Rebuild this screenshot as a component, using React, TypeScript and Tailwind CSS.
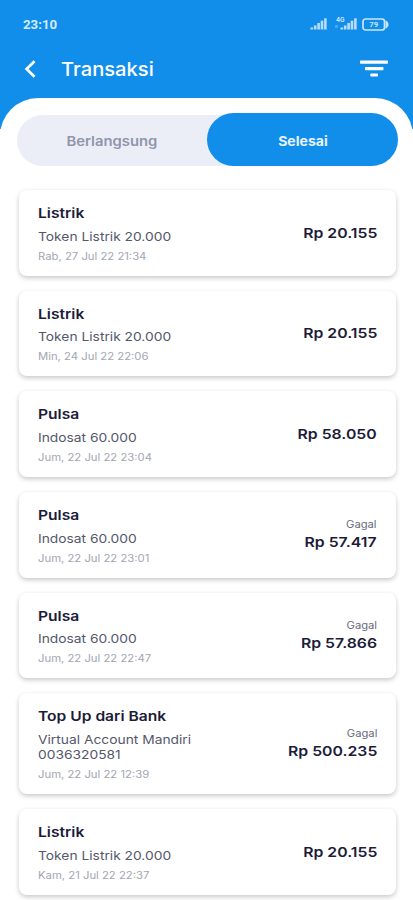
type Transaction = {
  name: string;
  detail: string[];
  date: string;
  amount: string;
  failed?: boolean;
};

const transactions: Transaction[] = [
  { name: "Listrik", detail: ["Token Listrik 20.000"], date: "Rab, 27 Jul 22 21:34", amount: "Rp 20.155" },
  { name: "Listrik", detail: ["Token Listrik 20.000"], date: "Min, 24 Jul 22 22:06", amount: "Rp 20.155" },
  { name: "Pulsa", detail: ["Indosat 60.000"], date: "Jum, 22 Jul 22 23:04", amount: "Rp 58.050" },
  { name: "Pulsa", detail: ["Indosat 60.000"], date: "Jum, 22 Jul 22 23:01", amount: "Rp 57.417", failed: true },
  { name: "Pulsa", detail: ["Indosat 60.000"], date: "Jum, 22 Jul 22 22:47", amount: "Rp 57.866", failed: true },
  { name: "Top Up dari Bank", detail: ["Virtual Account Mandiri", "0036320581"], date: "Jum, 22 Jul 22 12:39", amount: "Rp 500.235", failed: true },
  { name: "Listrik", detail: ["Token Listrik 20.000"], date: "Kam, 21 Jul 22 22:37", amount: "Rp 20.155" },
];

const Signal = () => (
  <svg width="17" height="12" viewBox="0 0 17 12" fill="#b9dcfa">
    <rect x="0.5" y="9.5" width="2.6" height="2" />
    <rect x="3.9" y="7.5" width="2.6" height="4" />
    <rect x="7.3" y="5" width="2.6" height="6.5" />
    <rect x="10.7" y="2.7" width="2.6" height="8.8" />
    <rect x="14.1" y="0.3" width="2.6" height="11.2" />
  </svg>
);

const StatusBar = () => (
  <div className="flex h-[48px] items-center justify-between pl-[23px] pr-[24px]">
    <span className="mt-0.5 text-[12.5px] font-bold leading-none text-[#d3ebff] font-['Roboto',sans-serif] origin-left scale-x-[1.06]">
      23:10
    </span>
    <div className="flex items-center">
      <Signal />
      <div className="relative ml-[13px] mr-[5px] h-3">
        <Signal />
        <span className="absolute -left-[4px] -top-px text-[6px] font-bold leading-none text-[#cfe7fc]">4G</span>
        <span className="absolute -left-[5px] top-[7px] h-[3px] w-[3px] bg-[#4aa8ef]" />
      </div>
      <svg width="27" height="13" viewBox="0 0 27 13" fill="none">
        <rect x="1" y="1" width="21.5" height="11" rx="2.5" stroke="#c9e5fc" strokeWidth="1.7" />
        <path d="M23.5 2.2c1.900.8 3 2.500 3 4.300s-1.100 3.500-3 4.300z" fill="#c9e5fc" />
        <text x="11.8" y="9.300" textAnchor="middle" fontSize="7.800" fontWeight="700" fontFamily="Roboto" fill="#c9e5fc">79</text>
      </svg>
    </div>
  </div>
);

const Header = () => (
  <div className="flex h-[42px] items-center pl-[24px] pr-[25px] text-white">
    <svg width="12" height="18" viewBox="0 0 12 18" fill="none" stroke="currentColor" strokeWidth="2.700">
      <path d="M10.500 1.200 2.600 9l7.900 7.800" />
    </svg>
    <h1 className="ml-[25px] flex-1 text-[19px] font-medium leading-none origin-left scale-x-[1.06]">Transaksi</h1>
    <svg width="28" height="18" viewBox="0 0 28 18" fill="currentColor">
      <rect x="0" y="0.500" width="28" height="3.300" rx="0.800" />
      <rect x="5" y="7" width="18.500" height="3.300" rx="0.800" />
      <rect x="10.300" y="13.400" width="7.700" height="3.200" rx="0.800" />
    </svg>
  </div>
);

const Tabs = () => (
  <div className="mr-[15px] ml-[17px] flex h-[53px] items-end">
    <button className="-mr-[31px] h-[51px] w-[221px] rounded-l-full bg-[#eceef7] pr-[31px] pt-0.5 text-[13px] font-semibold text-[#8f95ab]">
      <span className="inline-block scale-x-[1.14]">Berlangsung</span>
    </button>
    <button className="h-[53px] flex-1 rounded-full bg-[#118eea] pt-1 text-[13px] font-bold text-[#e4f3ff]">
      <span className="inline-block scale-x-[1.080]">Selesai</span>
    </button>
  </div>
);

const TransactionCard = ({ name, detail, date, amount, failed }: Transaction) => (
  <div className="flex items-center justify-between rounded-[8px] bg-white pl-[19px] pr-[19px] pt-[15px] pb-[13.200px] shadow-[0_2px_5px_rgba(0,0,0,0.22)]">
    <div className="whitespace-nowrap">
      <h2 className="origin-left scale-x-[1.2] text-[13px] font-semibold leading-[17px] text-[#1c1c38]">{name}</h2>
      <div className="mt-[6.500px] origin-left scale-x-[1.15] text-[12px] leading-[15px] text-[#55586b]">
        {detail.map((line) => (
          <p key={line}>{line}</p>
        ))}
      </div>
      <p className="mt-[5px] origin-left scale-x-[1.13] text-[10px] leading-[14px] text-[#a3a6b3]">{date}</p>
    </div>
    <div className="whitespace-nowrap text-right">
      {failed && <p className="origin-right scale-x-[1.12] text-[10px] leading-[13px] text-[#686b7c]">Gagal</p>}
      <p className={`${failed ? "" : "mb-[2px]"} origin-right scale-x-[1.17] text-[13.500px] font-semibold leading-[22px] text-[#1c1c38]`}>
        {amount}
      </p>
    </div>
  </div>
);

export default function App() {
  return (
    <div className="h-[900px] w-full overflow-hidden bg-white bg-[linear-gradient(#118eea_0_129px,#ffffff_129px)] font-['Inter',sans-serif]">
      <StatusBar />
      <Header />
      <main className="mt-2 rounded-t-[38px] bg-white pt-[15px]">
        <Tabs />
        {/* Transaction list */}
        <div className="mt-[24px] flex flex-col gap-[15px] pl-[19px] pr-[17px]">
          {transactions.map((item) => (
            <TransactionCard key={item.date} {...item} />
          ))}
        </div>
      </main>
    </div>
  );
}
